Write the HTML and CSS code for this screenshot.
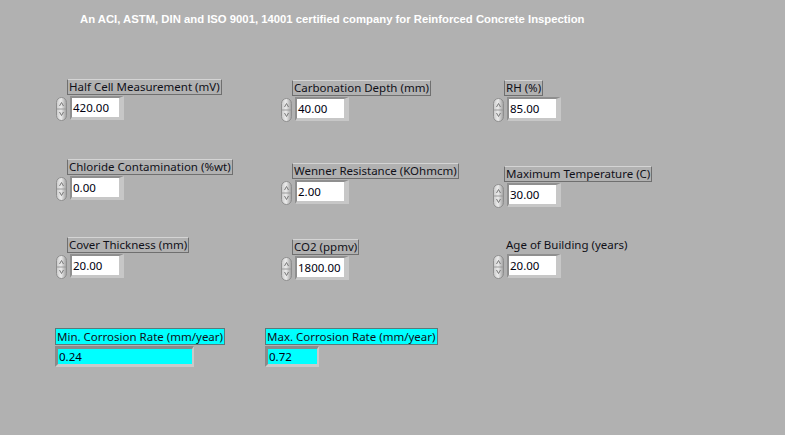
FILE: index.html
```html
<!DOCTYPE html>
<html>
<head>
<meta charset="utf-8">
<link rel="stylesheet" href="styles.css">
</head>
<body>
<div class="page">
  <div class="header">An ACI, ASTM, DIN and ISO 9001, 14001 certified company for Reinforced Concrete Inspection</div>
  <div class="panel">
    <div class="row r1">
      <div class="ctl col1">
        <div class="lbl">Half Cell Measurement (mV)</div>
        <div class="num"><svg class="spin" viewBox="0 0 11 24" width="11" height="24"><use href="#spin"/></svg><span class="field">420.00</span></div>
      </div>
      <div class="ctl col2 dy1">
        <div class="lbl">Carbonation Depth (mm)</div>
        <div class="num"><svg class="spin" viewBox="0 0 11 24" width="11" height="24"><use href="#spin"/></svg><span class="field">40.00</span></div>
      </div>
      <div class="ctl col3 dy1">
        <div class="lbl">RH (%)</div>
        <div class="num"><svg class="spin" viewBox="0 0 11 24" width="11" height="24"><use href="#spin"/></svg><span class="field">85.00</span></div>
      </div>
    </div>
    <div class="row r2">
      <div class="ctl col1">
        <div class="lbl">Chloride Contamination (%wt)</div>
        <div class="num"><svg class="spin" viewBox="0 0 11 24" width="11" height="24"><use href="#spin"/></svg><span class="field">0.00</span></div>
      </div>
      <div class="ctl col2 dy4">
        <div class="lbl">Wenner Resistance (KOhmcm)</div>
        <div class="num"><svg class="spin" viewBox="0 0 11 24" width="11" height="24"><use href="#spin"/></svg><span class="field">2.00</span></div>
      </div>
      <div class="ctl col3 dy7">
        <div class="lbl">Maximum Temperature (C)</div>
        <div class="num"><svg class="spin" viewBox="0 0 11 24" width="11" height="24"><use href="#spin"/></svg><span class="field">30.00</span></div>
      </div>
    </div>
    <div class="row r3">
      <div class="ctl col1">
        <div class="lbl">Cover Thickness (mm)</div>
        <div class="num"><svg class="spin" viewBox="0 0 11 24" width="11" height="24"><use href="#spin"/></svg><span class="field">20.00</span></div>
      </div>
      <div class="ctl col2 dy2">
        <div class="lbl">CO2 (ppmv)</div>
        <div class="num"><svg class="spin" viewBox="0 0 11 24" width="11" height="24"><use href="#spin"/></svg><span class="field">1800.00</span></div>
      </div>
      <div class="ctl col3">
        <div class="lbl plain">Age of Building (years)</div>
        <div class="num"><svg class="spin" viewBox="0 0 11 24" width="11" height="24"><use href="#spin"/></svg><span class="field">20.00</span></div>
      </div>
    </div>
    <div class="row r4">
      <div class="ind ind-min">
        <div class="ilbl">Min. Corrosion Rate (mm/year)</div>
        <div class="ival wide">0.24</div>
      </div>
      <div class="ind ind-max">
        <div class="ilbl">Max. Corrosion Rate (mm/year)</div>
        <div class="ival narrow">0.72</div>
      </div>
    </div>
  </div>
</div>
<svg width="0" height="0" class="defs">
  <defs>
    <linearGradient id="sg" x1="0" y1="0" x2="1" y2="0">
      <stop offset="0" stop-color="#c9c9c9"/>
      <stop offset="0.45" stop-color="#ececec"/>
      <stop offset="1" stop-color="#9d9d9d"/>
    </linearGradient>
    <g id="spin">
      <rect x="0.5" y="0.5" width="10" height="23" rx="5" ry="5" fill="url(#sg)" stroke="#8e8e8e"/>
      <line x1="1" y1="12" x2="10" y2="12" stroke="#9a9a9a"/>
      <path d="M3.5 9 L5.5 5.5 L7.5 9" fill="none" stroke="#6e6e6e" stroke-width="0.9"/>
      <path d="M3.5 15 L5.5 18.5 L7.5 15" fill="none" stroke="#6e6e6e" stroke-width="0.9"/>
    </g>
  </defs>
</svg>
</body>
</html>
```
FILE: styles.css
```css
html, body {
  margin: 0;
  padding: 0;
}
body {
  background: #b1b1b1;
  width: 785px;
  height: 435px;
  overflow: hidden;
  font-family: "Noto Sans", "Open Sans", sans-serif;
  color: #101018;
}
.defs {
  position: absolute;
  width: 0;
  height: 0;
}
.page {
  padding-top: 13px;
}
.header {
  padding-left: 80px;
  font-family: "Liberation Sans", Arial, sans-serif;
  font-weight: bold;
  font-size: 11.3px;
  line-height: 13px;
  color: #ffffff;
  height: 13px;
}
.panel {
  padding-left: 56px;
  padding-top: 53px;
}
.row {
  display: flex;
  align-items: flex-start;
}
.r1 { height: 80px; }
.r2 { height: 78px; }
.r3 { height: 91px; }
.col1 { width: 225px; }
.col2 { width: 212px; }
.col3 { width: 200px; }
.dy1 { margin-top: 1px; }
.dy2 { margin-top: 2px; }
.dy4 { margin-top: 4px; }
.dy7 { margin-top: 7px; }
.ctl {
  display: flex;
  flex-direction: column;
  align-items: flex-start;
}
.lbl {
  margin-left: 11px;
  height: 14px;
  line-height: 14px;
  padding: 0 1px 0 1px;
  font-size: 11.5px;
  border: 1px solid;
  border-color: #d4d4d4 #6f6f6f #6f6f6f #6f6f6f;
  white-space: nowrap;
}
.lbl.plain {
  border-color: transparent;
}
.num {
  display: flex;
  align-items: flex-start;
  margin-top: 1px;
}
.spin {
  display: block;
  margin-top: 1px;
}
.field {
  margin-left: 3px;
  width: 46px;
  height: 19px;
  line-height: 19px;
  padding-left: 1px;
  background: #ffffff;
  border-style: solid;
  border-width: 2px 5px 3px 2px;
  border-color: #8f8f8f #c7c7c7 #c7c7c7 #8f8f8f;
  font-size: 11.5px;
  color: #000010;
}
.r4 {
  margin-left: -1px;
}
.ind {
  display: flex;
  flex-direction: column;
  align-items: flex-start;
}
.ind-min { width: 210px; }
.ilbl {
  height: 15px;
  line-height: 15px;
  padding: 0 1px;
  font-size: 11.5px;
  background: #00ffff;
  border: 1px solid #5a7a7a;
  white-space: nowrap;
}
.ival {
  margin-top: 1px;
  height: 15px;
  line-height: 15px;
  padding-left: 1px;
  background: #00ffff;
  border-style: solid;
  border-width: 3px 2px 3px 3px;
  border-color: #8a8a8a #c9c9c9 #c9c9c9 #8a8a8a;
  font-size: 11.5px;
  color: #000010;
}
.wide { width: 133px; }
.narrow { width: 48px; }
```
